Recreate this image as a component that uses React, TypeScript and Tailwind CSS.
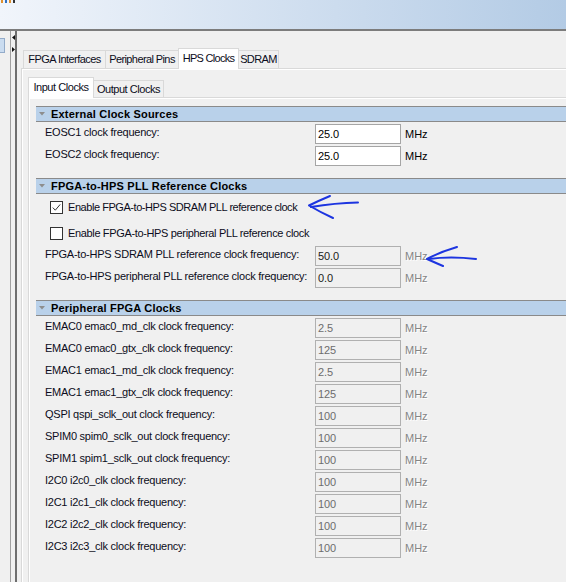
import React from "react";

type FieldState = "enabled" | "disabledDark" | "disabled";

function Header({ title }: { title: string }) {
  return (
    <div className="h-[16px] border-y border-[#8a8a8a] bg-[#b9d1ea] flex items-center pl-[3px]">
      <svg width="6" height="4" viewBox="0 0 6 4" className="mr-[6px] -mt-[1px]">
        <path d="M0 0H6L3 3.5Z" fill="#8d8d8d" />
      </svg>
      <span className="font-bold tracking-[0.2px] text-black leading-[14px] whitespace-nowrap">{title}</span>
    </div>
  );
}

function FieldRow({ label, value, state }: { label: string; value: string; state: FieldState }) {
  const boxCls =
    state === "enabled"
      ? "w-[86px] h-[20px] shrink-0 border border-[#a5a5a5] bg-white text-black pl-[2px] flex items-center tracking-[-0.1px]"
      : state === "disabledDark"
      ? "w-[86px] h-[20px] shrink-0 border border-[#b0b0b0] bg-[#f0f0f0] text-[#1a1a1a] pl-[2px] flex items-center tracking-[-0.1px]"
      : "w-[86px] h-[20px] shrink-0 border border-[#b0b0b0] bg-[#f0f0f0] text-[#6d6d6d] pl-[2px] flex items-center tracking-[-0.1px]";
  const unitCls =
    state === "enabled"
      ? "ml-[4px] leading-[20px] text-black"
      : "ml-[4px] leading-[20px] text-[#858585] [text-shadow:1px_1px_0_#ffffff]";
  return (
    <div className="mt-[2px] h-[20px] flex pl-[9px]">
      <div className="w-[270px] shrink-0 leading-[16px] tracking-[-0.25px] whitespace-nowrap">{label}</div>
      <div className={boxCls}>{value}</div>
      <div className={unitCls}>MHz</div>
    </div>
  );
}

function CheckRow({ label, checked, first }: { label: string; checked: boolean; first: boolean }) {
  return (
    <div className={first ? "h-[26px] pt-[7px] pl-[14px] flex items-start" : "h-[24px] pt-[7px] pl-[14px] flex items-start"}>
      <div className="w-[13px] h-[13px] shrink-0 border border-[#333333] bg-white">
        {checked && (
          <svg width="11" height="11" viewBox="0 0 11 11">
            <path d="M1.8 5.6 L4.3 8.2 L9.2 2.4" fill="none" stroke="#333333" strokeWidth="1" />
          </svg>
        )}
      </div>
      <span
        className={
          first
            ? "ml-[5px] leading-[13px] tracking-[-0.45px] whitespace-nowrap"
            : "ml-[5px] leading-[13px] tracking-[-0.35px] whitespace-nowrap"
        }
      >
        {label}
      </span>
    </div>
  );
}

const periph: [string, string][] = [
  ["EMAC0 emac0_md_clk clock frequency:", "2.5"],
  ["EMAC0 emac0_gtx_clk clock frequency:", "125"],
  ["EMAC1 emac1_md_clk clock frequency:", "2.5"],
  ["EMAC1 emac1_gtx_clk clock frequency:", "125"],
  ["QSPI qspi_sclk_out clock frequency:", "100"],
  ["SPIM0 spim0_sclk_out clock frequency:", "100"],
  ["SPIM1 spim1_sclk_out clock frequency:", "100"],
  ["I2C0 i2c0_clk clock frequency:", "100"],
  ["I2C1 i2c1_clk clock frequency:", "100"],
  ["I2C2 i2c2_clk clock frequency:", "100"],
  ["I2C3 i2c3_clk clock frequency:", "100"],
];

export default function App() {
  return (
    <div className="relative w-[566px] h-[582px] overflow-hidden bg-[#f0f0f0] font-['Liberation_Sans',Arial,sans-serif] text-[11px] text-[#0c0c20] flex flex-col">
      {/* title band */}
      <div className="h-[29px] shrink-0 bg-gradient-to-r from-[#f1f5fb] to-[#b3cbe5] flex items-start gap-[2px] pl-[1px]">
        <span className="w-[2px] h-[3px] bg-[#e0902c]" />
        <span className="w-[2px] h-[3px] bg-[#2f6fbf]" />
        <span className="w-[2px] h-[3px] bg-[#e0902c]" />
        <span className="w-[2px] h-[3px] bg-[#333333]" />
      </div>
      <div className="h-[2px] shrink-0 bg-[#7c7c7c]" />

      <div className="flex flex-1 min-h-0">
        {/* left strip */}
        <div className="w-[10px] shrink-0 pt-[7px]">
          <div className="w-[5px] h-[15px] bg-[#cadcf0] border-y border-r border-[#93abc9]" />
        </div>
        {/* splitter */}
        <div className="w-[7px] shrink-0 border-l border-[#a0a0a0] border-r-2 border-r-[#6e6e6e] flex flex-col items-center pt-[4px] gap-[7px]">
          <svg width="3" height="5" viewBox="0 0 3 5">
            <path d="M3 0V5L0 2.5Z" fill="#111" />
          </svg>
          <svg width="3" height="5" viewBox="0 0 3 5">
            <path d="M0 0V5L3 2.5Z" fill="#111" />
          </svg>
        </div>

        {/* main */}
        <div className="flex-1 min-w-0 pl-[4px] pt-[17px] flex flex-col">
          {/* outer tabs */}
          <div className="h-[20px] flex items-end ml-[2px] shrink-0">
            <div className="w-[83px] h-[18px] border-x border-t border-[#d9d9d9] flex items-center justify-center whitespace-nowrap tracking-[-0.55px]">
              FPGA Interfaces
            </div>
            <div className="w-[74px] h-[18px] -ml-[1px] border-x border-t border-[#d9d9d9] flex items-center justify-center whitespace-nowrap tracking-[-0.6px]">
              Peripheral Pins
            </div>
            <div className="relative z-10 w-[61px] h-[21px] -mb-[1px] -ml-[1px] border-x border-t border-[#d9d9d9] bg-white flex items-center justify-center pb-[2px] whitespace-nowrap tracking-[-0.7px]">
              HPS Clocks
            </div>
            <div className="w-[41px] h-[18px] -ml-[1px] border-x border-t border-[#d9d9d9] flex items-center justify-center whitespace-nowrap tracking-[-0.6px]">
              SDRAM
            </div>
          </div>

          {/* outer panel */}
          <div className="flex-1 border-t border-l border-[#d9d9d9] flex flex-col">
            <div className="flex-1 border-t border-l border-white pl-[5px] pt-[7px] flex flex-col">
              {/* inner tabs */}
              <div className="h-[20px] flex items-end shrink-0">
                <div className="relative z-10 w-[66px] h-[21px] -mb-[1px] border-x border-t border-[#d9d9d9] bg-white flex items-center justify-center pb-[1px] whitespace-nowrap tracking-[-0.45px]">
                  Input Clocks
                </div>
                <div className="w-[71px] h-[17px] -ml-[1px] border-x border-t border-[#d9d9d9] flex items-center justify-center whitespace-nowrap tracking-[-0.45px]">
                  Output Clocks
                </div>
              </div>

              {/* inner panel */}
              <div className="flex-1 border-t border-l border-[#d9d9d9] flex flex-col">
                <div className="flex-1 border-t border-l border-white pl-[6px] pt-[7px]">
                  <Header title="External Clock Sources" />
                  <FieldRow label="EOSC1 clock frequency:" value="25.0" state="enabled" />
                  <FieldRow label="EOSC2 clock frequency:" value="25.0" state="enabled" />

                  <div className="mt-[12px]">
                    <Header title="FPGA-to-HPS PLL Reference Clocks" />
                  </div>
                  <CheckRow label="Enable FPGA-to-HPS SDRAM PLL reference clock" checked first />
                  <CheckRow label="Enable FPGA-to-HPS peripheral PLL reference clock" checked={false} first={false} />
                  <FieldRow label="FPGA-to-HPS SDRAM PLL reference clock frequency:" value="50.0" state="disabledDark" />
                  <FieldRow label="FPGA-to-HPS peripheral PLL reference clock frequency:" value="0.0" state="disabledDark" />

                  <div className="mt-[12px]">
                    <Header title="Peripheral FPGA Clocks" />
                  </div>
                  {periph.map(([l, v]) => (
                    <FieldRow key={l} label={l} value={v} state="disabled" />
                  ))}
                </div>
              </div>
            </div>
          </div>
        </div>
      </div>

      {/* hand-drawn annotation arrows */}
      <svg className="absolute inset-0 pointer-events-none" width="566" height="582" viewBox="0 0 566 582">
        <g fill="none" stroke="#1d35e0" strokeWidth="2" strokeLinecap="round" strokeLinejoin="round">
          <path d="M330 196 Q318 201 309 205.5 Q320 212 333 218" />
          <path d="M311 207 Q335 203 358 202.5" />
          <path d="M457 247 Q440 252 427 259 Q436 263 443 266" />
          <path d="M429 259 Q450 256 476 259" />
        </g>
      </svg>
    </div>
  );
}
